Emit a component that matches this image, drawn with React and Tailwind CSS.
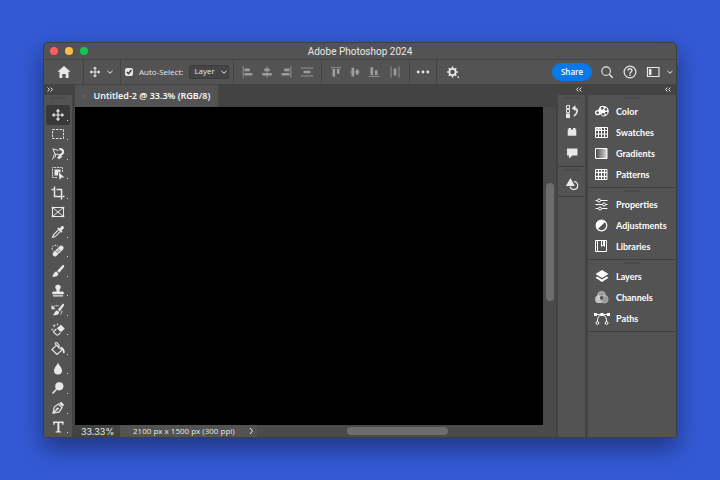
import React from "react";

function Icon({ children, className = "", size = 16 }) {
  return (
    <svg
      viewBox="0 0 16 16"
      width={size}
      height={size}
      fill="none"
      stroke="currentColor"
      strokeWidth="1"
      aria-hidden="true"
      className={"shrink-0 " + className}
    >
      {children}
    </svg>
  );
}

const solid = { fill: "currentColor", stroke: "none" };

const moveShape = (
  <>
    <path d="M8 3.500v9M3.500 8h9" strokeWidth="1.2" />
    <path {...solid} d="M8 1.800l2.200 2.600H5.800zM8 14.200l2.200-2.600H5.800zM1.800 8l2.600-2.200v4.400zM14.200 8l-2.600-2.200v4.400z" />
  </>
);

const tools = [
  { name: "Move", art: moveShape, more: true },
  {
    name: "Rectangular Marquee",
    art: <rect x="2.500" y="3.500" width="11" height="9" strokeDasharray="2.400 1.200" />,
    more: true,
  },
  {
    name: "Lasso",
    art: (
      <>
        <path d="M8.500 4.500L2.800 2.800l2.200 5.400 4.800.3M5 8.200c-2 .6-2.200 2.600-.4 2.800 1.600 0 1.200-1.600.4-2.800M3.400 11c0 1.500-.6 2-1.200 2.600" />
        <path d="M9.300 3.300c4-1.200 5.200 4.200 1.600 5.300L8 12.400" strokeWidth="2.1" />
        <path d="M8.600 12.800l3.400-2.600" strokeWidth="1.3" />
      </>
    ),
    more: true,
  },
  {
    name: "Object Selection",
    art: (
      <>
        <path d="M12.500 7V2.500h-10v10H7" strokeDasharray="2 .7" strokeWidth=".9" />
        <path {...solid} d="M4.500 4.500h6v3L8 6.800v3.700H4.500z" />
        <path {...solid} d="M8.500 7l6 5.400-3.100.2-1.700 2.300z" />
      </>
    ),
    more: true,
  },
  {
    name: "Crop",
    art: <path d="M4.500 1.500v10H11M1.500 4.500h2M6.500 4.500h5v10M12.500 11.500h2" strokeWidth="1.5" />,
    more: true,
  },
  {
    name: "Frame",
    art: (
      <>
        <path d="M2.500 3.500h11v9h-11zM2.500 3.500l11 9M13.500 3.500l-11 9" />
        <path {...solid} d="M1.700 2.700h1.800v1.800H1.700zM12.500 2.700h1.800v1.800h-1.800zM1.700 11.500h1.800v1.800H1.700zM12.500 11.500h1.800v1.800h-1.800z" />
      </>
    ),
    more: false,
  },
  {
    name: "Eyedropper",
    art: (
      <>
        <path d="M8.600 5.600l-5.200 5.200-.9 2.700 2.700-.9 5.200-5.200" strokeWidth="1.1" />
        <path {...solid} d="M7.200 4.500l1.100-1 1.200 1 1.800-2c1.600-1.400 3.600.6 2.200 2.200l-2 1.800 1 1.200-1 1.100z" />
      </>
    ),
    more: true,
  },
  {
    name: "Spot Healing Brush",
    art: (
      <>
        <path d="M3.600 8.200C1 6.800 1.800 2.500 5 2.300c1.400 0 2.400.4 3 1.200" strokeDasharray="1.500 1" />
        <path d="M5 11.200L11.200 5" strokeWidth="4.600" strokeLinecap="round" />
        <path d="M5.700 7.700l2.800 2.900M7.900 5.500l2.800 2.900" stroke="#535353" strokeWidth=".7" />
        <path d="M7.600 8.100h1.200" stroke="#535353" />
      </>
    ),
    more: true,
  },
  {
    name: "Brush",
    art: <path {...solid} d="M13.800 2.200c.8.7.4 1.400-.2 2.200L9.200 9.800 7.100 8l4.700-5c.7-.8 1.300-1.300 2-.8zM6.300 8.600l2.100 1.900c-.2 2.800-3.100 3.600-6.400 3 1.800-1 1.300-4.300 4.300-4.900z" />,
    more: true,
  },
  {
    name: "Clone Stamp",
    art: <path {...solid} d="M8 1.800c3 0 3.200 2.800 2 4.300-.7 1-.6 1.600-.5 2.300h2.700c1.200 0 1.600.7 1.600 1.600v1.200H2.200V10c0-.9.4-1.600 1.600-1.600h2.700c.1-.7.2-1.300-.5-2.300-1.200-1.500-1-4.300 2-4.300zM3 12.200h10v1.300H3z" />,
    more: true,
  },
  {
    name: "History Brush",
    art: (
      <>
        <path {...solid} d="M13.800 2c.6.6.4 1.200-.2 2L9.800 9.400 7.900 7.800l4-5c.6-.7 1.300-1.200 1.900-.8zM7.300 8.400l1.900 1.700c-.2 2.800-3.100 3.600-6.400 3 1.800-1 1.500-4.100 4.500-4.700z" />
        <path d="M3 5.500c1.200-1.600 3.200-2.200 5.500-1.500M12 8.800c-.1 1.800-.8 3-2 4" strokeDasharray="3 .8" />
        <path {...solid} d="M1.500 3v4.200h4z" />
      </>
    ),
    more: true,
  },
  {
    name: "Magic Eraser",
    art: (
      <>
        <path {...solid} d="M6.800 6.200l4-3.400 4 3.800-3.900 3.700zM4.200 2l.5 1.200 1.200.5-1.200.5-.5 1.200-.5-1.200-1.200-.5 1.200-.5zM2.200 6.200l.4 1 1 .4-1 .4-.4 1-.4-1-1-.4 1-.4zM7.500 1l.4.9.9.4-.9.4-.4.9-.4-.9-.9-.4.9-.4z" />
        <path d="M6.400 7l-3 2.800 3.200 3.200h1.500l2.400-2.300" strokeWidth="1.1" />
      </>
    ),
    more: true,
  },
  {
    name: "Paint Bucket",
    art: (
      <>
        <path d="M6.500 4.200l5.400 5-5 4.300-5-5zM8.600 6.300L5.400 3.100c-.8-1.200.7-2.200 1.600-1.200L9 4.200v3.300" strokeWidth="1.1" />
        <path {...solid} d="M9.700 5.400c2.600.2 4.800 1.800 5 5.400 0 2-1.700 2-1.800.3 0-1.600-.5-2.200-1.200-2.800z" />
      </>
    ),
    more: true,
  },
  {
    name: "Blur",
    art: <path {...solid} d="M8 1.800c1 2.600 4 4.800 4 7.800a4 4 0 0 1-8 0c0-3 3-5.200 4-7.800z" />,
    more: true,
  },
  {
    name: "Dodge",
    art: (
      <>
        <circle {...solid} cx="9.300" cy="6.300" r="4.100" />
        <path d="M6.500 9.200l-4 4.200" strokeWidth="1.500" />
      </>
    ),
    more: true,
  },
  {
    name: "Pen",
    art: (
      <>
        <path d="M3 13.300l1.200-6.200 4.200-3 3.600 3.600-2.800 4.200zM3.200 13l4-4" strokeWidth="1.200" />
        <circle {...solid} cx="7.700" cy="8.600" r="1.200" />
        <path {...solid} d="M9.200 3.300l1.900-1.500 3 3-1.500 1.900z" />
      </>
    ),
    more: true,
  },
  {
    name: "Type",
    art: <path {...solid} d="M3.200 2.500h10.400v3.200h-1.100l-.6-1.800H9.400v8.300l1.800.4v.9H5.600v-.9l1.800-.4V3.900H4.900l-.6 1.800H3.200z" />,
    more: true,
  },
];

const horizontalAlign = [
  { name: "Align left edges", art: <><path d="M2.500 1.500v13" /><path {...solid} d="M4 4h6v3H4zM4 9h9v3H4z" /></> },
  { name: "Align horizontal centers", art: <><path d="M8 1.500v13" /><path {...solid} d="M5 4h6v3H5zM2.500 9h11v3h-11z" /></> },
  { name: "Align right edges", art: <><path d="M13.500 1.500v13" /><path {...solid} d="M6 4h6v3H6zM3 9h9v3H3z" /></> },
];

const verticalAlign = [
  { name: "Align top edges", art: <><path d="M2 3h12" /><path {...solid} d="M4 4.500h3v9H4zM9 4.500h3V10H9z" /></> },
  { name: "Align vertical centers", art: <><path d="M2 8h12" /><path {...solid} d="M4 3h3v10H4zM9 5h3v6H9z" /></> },
  { name: "Align bottom edges", art: <><path d="M2 13h12" /><path {...solid} d="M4 2.500h3v9H4zM9 6h3v5.500H9z" /></> },
];

const panelGroups = [
  [
    {
      name: "Color",
      art: (
        <path
          {...solid}
          fillRule="evenodd"
          d="M8.500 1.700c4 0 6.300 2.800 6.300 5.400S12.600 12.600 9.300 12.600c-1.900 0-1.300-2.100-2.800-2.100-1.200 0-1.800 1-3.200.8C1.700 11.100.9 9.900.9 8.600c0-1.900 1.500-2.200 2.800-2.500C5.600 5.500 4.700 1.700 8.500 1.700zM8.300 2.800a1.400 1.400 0 1 0 .01 0zM11.900 4.100a1.300 1.300 0 1 0 .01 0zM12.200 7.700a1.300 1.300 0 1 0 .01 0zM9.200 8.900a1.400 1.400 0 1 0 .01 0zM3.600 7.200a1.400 1.400 0 1 0 .01 0z"
        />
      ),
    },
    {
      name: "Swatches",
      art: (
        <>
          <path d="M1.500 2.500h12v10h-12zM1.500 5.500h12M1.500 9h12M4.500 2.500v10M7.500 2.500v10M10.500 2.500v10" />
          <path {...solid} d="M2 3h5v2.500H2z" opacity=".6" />
        </>
      ),
    },
    {
      name: "Gradients",
      art: (
        <>
          <defs>
            <linearGradient id="panelGradient">
              <stop offset="0" stopColor="#444444" />
              <stop offset="1" stopColor="#dddddd" />
            </linearGradient>
          </defs>
          <path d="M1.500 2.500h11.500v10H1.500z" fill="url(#panelGradient)" />
        </>
      ),
    },
    {
      name: "Patterns",
      art: (
        <>
          <path d="M1.500 2.500h11.500v10H1.500zM4.500 2.500v10M7.500 2.500v10M10.500 2.500v10M1.500 5.500h11.500M1.500 9.500h11.500" />
          <path {...solid} d="M3.500 4.500h2v2h-2zM6.500 4.500h2v2h-2zM9.500 4.500h2v2h-2zM3.500 8.500h2v2h-2zM6.500 8.500h2v2h-2zM9.500 8.500h2v2h-2z" />
        </>
      ),
    },
  ],
  [
    {
      name: "Properties",
      art: (
        <>
          <path d="M1.500 3.500h2M6.500 3.500h7M1.500 7.500h7M11.500 7.500h2M1.500 11.500h3M7.500 11.500h6" />
          <circle cx="5" cy="3.500" r="1.500" />
          <circle cx="10" cy="7.500" r="1.500" />
          <circle cx="6" cy="11.500" r="1.500" />
        </>
      ),
    },
    {
      name: "Adjustments",
      art: (
        <>
          <circle cx="7.500" cy="7.500" r="5.300" strokeWidth="1.200" />
          <path {...solid} d="M11.300 3.700A5.300 5.300 0 0 0 3.700 11.300z" />
        </>
      ),
    },
    {
      name: "Libraries",
      art: (
        <>
          <path d="M1.500 1.500h11v11h-11zM3.500 1.500v11" />
          <path {...solid} d="M7 2h4v6L9 6.500 7 8z" />
          <path d="M8.500 2v4" stroke="#535353" strokeWidth="1" />
        </>
      ),
    },
  ],
  [
    {
      name: "Layers",
      art: (
        <>
          <path {...solid} d="M8 1l6.500 4L8 9 1.500 5z" />
          <path {...solid} d="M3.200 7.500L8 10.500l4.800-3 1.700 1.200L8 12.900 1.500 8.700z" />
        </>
      ),
    },
    {
      name: "Channels",
      art: (
        <>
          <circle cx="7.500" cy="5.300" r="3.900" fill="#9b9b9b" stroke="#b0b0b0" />
          <circle cx="5" cy="9.200" r="3.900" fill="#d8d8d8" stroke="none" opacity=".85" />
          <circle cx="10.200" cy="9.200" r="3.900" fill="#a6a6a6" stroke="#c4c4c4" strokeWidth=".8" opacity=".85" />
          <circle cx="7.600" cy="7.900" r="1.800" fill="#555555" stroke="none" />
        </>
      ),
    },
    {
      name: "Paths",
      art: (
        <>
          <path d="M1 3.500h14M7 3.800c-2.500.8-3.600 3.200-3.600 7M9 3.800c2.500.8 3.600 3.200 3.600 7" />
          <path {...solid} d="M0 2h3v3H0zM6.500 2h3v3h-3zM13 2h3v3h-3z" />
          <circle cx="3.400" cy="12" r="1.400" />
          <circle cx="12.600" cy="12" r="1.400" />
        </>
      ),
    },
  ],
];

const dockGroups = [
  [
    {
      name: "History",
      art: (
        <>
          <path d="M2.500 1.500h3v3h-3zM2.500 5.500h3v3h-3z" />
          <path {...solid} d="M2 9.500h4V14H2zM7.700 4.200l3.800-2.900v5.800z" />
          <path d="M10.500 4.200c4 .6 3.300 5-.6 8" strokeWidth="1.600" />
        </>
      ),
    },
    {
      name: "Plugins",
      art: <path {...solid} d="M4.500 3H7v1.500h2V3h2.500v1.500h.8v6.300H3.700V4.500h.8z" />,
    },
    {
      name: "Comments",
      art: <path {...solid} d="M3 2.500h10.500v7H8.500L5 12.500v-3H3z" />,
    },
  ],
  [
    {
      name: "Shapes",
      art: (
        <>
          <path {...solid} d="M6.500 2l4.300 8H1.800z" />
          <path d="M10 5.700a3.900 3.900 0 1 1-3.900 5" strokeWidth="1.200" />
        </>
      ),
    },
  ],
];

function Separator() {
  return <span className="h-6 w-px shrink-0 bg-[#434343]" />;
}

function Chevron({ size = 8 }) {
  return (
    <svg viewBox="0 0 8 8" width={size} height={size} fill="none" stroke="currentColor" strokeWidth="1" aria-hidden="true" className="shrink-0">
      <path d="M1.500 3L4 5.200 6.500 3" />
    </svg>
  );
}

function DoubleArrow({ flip }) {
  return (
    <svg viewBox="0 0 8 8" width="8" height="8" fill="none" stroke="currentColor" strokeWidth="1" aria-hidden="true">
      <path d={flip ? "M1.500 1.500l2 2-2 2M4.500 1.500l2 2-2 2" : "M3.500 1.500l-2 2 2 2M6.500 1.500l-2 2 2 2"} />
    </svg>
  );
}

function Grip() {
  return <div className="mx-auto my-0.5 h-0.5 w-4 shrink-0 bg-[#4b4b4b]" />;
}

function AlignButtons({ items, children }) {
  return (
    <div className="mx-[7px] flex items-center gap-[5px] text-[#9d9d9d]">
      {items.map((item) => (
        <button key={item.name} aria-label={item.name} className="flex">
          <Icon size={14}>{item.art}</Icon>
        </button>
      ))}
      {children}
    </div>
  );
}

function OptionsBar() {
  return (
    <div className="flex h-[26px] shrink-0 items-center border-t border-b border-[#434343] pr-0.5 pl-3">
      <button aria-label="Home" className="mr-[11px] flex">
        <Icon>
          <path {...solid} d="M8 2l6.500 5.800h-2V14H9.700v-4H6.300v4H3.500V7.800h-2z" />
        </Icon>
      </button>
      <Separator />
      <button aria-label="Move tool presets" className="mr-1.5 ml-1 flex items-center gap-1">
        <Icon size={14}>{moveShape}</Icon>
        <Chevron />
      </button>
      <Separator />
      <label className="ml-1 flex items-center gap-1.5 text-[8px] font-medium whitespace-nowrap">
        <span className="relative flex size-2">
          <input type="checkbox" defaultChecked className="size-2 appearance-none rounded-[2px] bg-[#e4e4e4]" />
          <svg viewBox="0 0 8 8" className="pointer-events-none absolute inset-0 size-2" fill="none" stroke="#333333" strokeWidth="1.300" aria-hidden="true">
            <path d="M1.800 4l1.700 1.700L6.400 2" />
          </svg>
        </span>
        Auto-Select:
      </label>
      <span className="relative mr-1 ml-1.5 flex items-center">
        <select aria-label="Auto-select target" defaultValue="Layer" className="h-3.5 w-10 appearance-none rounded-[2px] border border-[#3c3c3c] bg-[#454545] pb-0.5 pl-1 text-[8px] leading-[10px] font-medium">
          <option>Layer</option>
          <option>Group</option>
        </select>
        <span className="pointer-events-none absolute right-px">
          <Chevron />
        </span>
      </span>
      <Separator />
      <AlignButtons items={horizontalAlign}>
        <button aria-label="Distribute widths" className="ml-0.5 flex">
          <Icon size={14}><path d="M1 3.500h14M1 12.500h14" /><path {...solid} d="M4 6.500h8v3H4z" /></Icon>
        </button>
      </AlignButtons>
      <Separator />
      <AlignButtons items={verticalAlign}>
        <button aria-label="Distribute heights" className="ml-0.5 flex">
          <Icon size={14}><path d="M3.500 1.500v13M12.500 1.500v13" /><path {...solid} d="M6.500 4h3v8h-3z" /></Icon>
        </button>
      </AlignButtons>
      <Separator />
      <button aria-label="More options" className="mx-1.5 flex">
        <Icon size={14}>
          <circle {...solid} cx="2.500" cy="8" r="1.600" />
          <circle {...solid} cx="8" cy="8" r="1.600" />
          <circle {...solid} cx="13.500" cy="8" r="1.600" />
        </Icon>
      </button>
      <Separator />
      <button aria-label="Settings" className="ml-2 flex">
        <Icon>
          <circle cx="7.500" cy="8" r="3.100" strokeWidth="1.700" />
          <path d="M7.500 2.600v2M7.500 11.400v2M2.100 8h2M10.900 8h2M3.700 4.200l1.400 1.400M9.900 10.400l1.400 1.400M11.300 4.200L9.900 5.600M5.100 10.400l-1.400 1.400" strokeWidth="1.600" />
          <path {...solid} d="M12.500 12.500h1.500V14h-1.500z" />
        </Icon>
      </button>
      <button className="mr-2 ml-auto h-[18px] w-10 rounded-full bg-[#0a78e8] text-[8px] font-semibold text-white">Share</button>
      <button aria-label="Search" className="mr-2 flex">
        <Icon size={14}>
          <circle cx="7" cy="7" r="4.900" strokeWidth="1.300" />
          <path d="M10.500 10.500l4 4" strokeWidth="1.600" />
        </Icon>
      </button>
      <button aria-label="Help" className="mr-2 flex">
        <Icon>
          <circle cx="8" cy="8" r="5.900" strokeWidth="1.200" />
          <path d="M6 6.600c.1-2.500 4-2.400 4-.1 0 1.500-2 1.500-2 3.200" strokeWidth="1.300" />
          <path {...solid} d="M7.300 10.600h1.400V12H7.300z" />
        </Icon>
      </button>
      <button aria-label="Workspace" className="flex items-center gap-1">
        <Icon>
          <path d="M1.500 3.500h11.500v9H1.500z" strokeWidth="1.200" />
          <path {...solid} d="M3 5h2.500v6H3z" />
        </Icon>
        <Chevron />
      </button>
    </div>
  );
}

function Toolbar() {
  return (
    <aside className="flex w-[31px] shrink-0 flex-col border-r-[3px] border-[#434343]">
      <div className="flex h-[10px] shrink-0 items-center bg-[#434343] pl-0.5">
        <DoubleArrow flip />
      </div>
      <Grip />
      <div className="flex min-h-0 flex-1 flex-col pt-1">
        {tools.map((tool, index) => (
          <button
            key={tool.name}
            aria-label={tool.name}
            className={
              "relative mx-auto flex min-h-0 w-6 flex-1 items-center justify-center rounded-[2px] " +
              (index === 0 ? "bg-[#393939]" : "")
            }
          >
            <Icon>{tool.art}</Icon>
            {tool.more && <span className="absolute right-0.5 bottom-1 size-px bg-[#dddddd]" />}
          </button>
        ))}
      </div>
    </aside>
  );
}

function Document() {
  return (
    <main className="flex min-w-0 flex-1 flex-col bg-[#434343]">
      <div className="flex h-[22px] shrink-0">
        <button className="flex items-center gap-2 bg-[#535353] pr-2 pl-1.5 text-[9px] font-semibold whitespace-nowrap text-white">
          <span className="text-[8px] font-normal text-[#6d6d6d]">×</span>
          Untitled-2 @ 33.3% (RGB/8)
        </button>
      </div>
      <div className="flex min-h-0 flex-1">
        <div className="flex-1 bg-black" />
        <div className="flex w-[13px] flex-col items-center bg-[#4a4a4a]">
          <div className="basis-[24%]" />
          <div className="w-2 basis-[37%] rounded-full bg-[#6d6d6d]" />
        </div>
      </div>
      <div className="flex h-3 shrink-0 items-center bg-[#4a4a4a]">
        <span className="h-full w-[45px] bg-[#434343] pl-1.5 font-['Inter',sans-serif] text-[9px] leading-[14px]">33.33%</span>
        <div className="flex h-full w-[137px] items-center justify-between bg-[#535353] pr-0.5 pl-[13px] text-[8px] whitespace-nowrap">
          2100 px x 1500 px (300 ppi)
          <svg viewBox="0 0 8 8" width="8" height="8" fill="none" stroke="currentColor" aria-hidden="true">
            <path d="M3 1l2.500 3L3 7" />
          </svg>
        </div>
        <div className="flex h-full min-w-0 flex-1 items-center">
          <div className="basis-[30%]" />
          <div className="h-2 basis-[34%] rounded-full bg-[#6d6d6d]" />
        </div>
      </div>
    </main>
  );
}

function Dock() {
  return (
    <aside className="flex w-[29px] shrink-0 flex-col border-l-2 border-[#434343]">
      <div className="flex h-[10px] items-center justify-end bg-[#434343] pr-0.5">
        <DoubleArrow />
      </div>
      {dockGroups.map((group, index) => (
        <div key={index} className="flex flex-col items-center border-b border-[#3f3f3f] pb-0.5">
          <Grip />
          {group.map((item) => (
            <button key={item.name} aria-label={item.name} className="flex h-[21px] items-center">
              <Icon>{item.art}</Icon>
            </button>
          ))}
        </div>
      ))}
    </aside>
  );
}

function Panels() {
  return (
    <aside className="flex w-[91px] shrink-0 flex-col border-l-[3px] border-[#434343]">
      <div className="flex h-[10px] items-center justify-end bg-[#434343] pr-1">
        <DoubleArrow />
      </div>
      {panelGroups.map((group, index) => (
        <div key={index} className="border-b border-[#3f3f3f] pb-0.5">
          <Grip />
          {group.map((item) => (
            <button key={item.name} className="flex h-[21px] w-full items-center gap-1.5 pl-1.5 font-['Lato',sans-serif] text-[9px] font-bold text-white">
              <Icon>{item.art}</Icon>
              {item.name}
            </button>
          ))}
        </div>
      ))}
    </aside>
  );
}

export default function App() {
  return (
    <div className="flex h-screen bg-[#3359d4] px-[43px] py-[42px] font-['Open_Sans','Noto_Sans',sans-serif] text-[#e8e8e8]">
      <div className="flex min-w-0 flex-1 flex-col overflow-hidden rounded-t-[5px] border border-[#3f3f3f] bg-[#535353] shadow-[0_10px_24px_rgba(0,0,0,0.4)]">
        <header className="relative flex h-4 shrink-0 items-center gap-[7px] pl-1.5">
          <button aria-label="Close" className="size-2 rounded-full bg-[#ff5f57]" />
          <button aria-label="Minimize" className="size-2 rounded-full bg-[#ffbd44]" />
          <button aria-label="Zoom" className="size-2 rounded-full bg-[#14c64c]" />
          <h1 className="absolute inset-x-0 text-center font-['Roboto',sans-serif] text-[10px]">Adobe Photoshop 2024</h1>
        </header>
        <OptionsBar />
        <div className="flex min-h-0 flex-1">
          <Toolbar />
          <Document />
          <Dock />
          <Panels />
        </div>
      </div>
    </div>
  );
}
